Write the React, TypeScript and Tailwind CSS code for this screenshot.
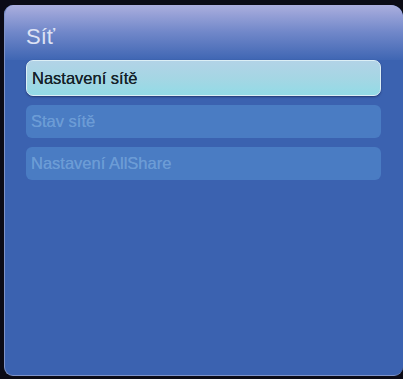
export default function App() {
  const items = ['Stav sítě', 'Nastavení AllShare']
  return (
    <div className="w-[403px] h-[379px] bg-[#0b0b16] pt-[5px] pl-[4px] pb-[3px] flex" style={{ fontFamily: '"Liberation Sans", Arial, sans-serif' }}>
      <div className="flex-1 rounded-[9px] rounded-tr-[12px] bg-[#3b62b0] border-l border-b border-[#7f93c8] overflow-hidden flex flex-col">
        <div className="h-[55px] bg-gradient-to-b from-[#abaede] via-[#7087c9] to-[#3f66b3] px-[21px] pt-[21px]">
          <div className="text-[22px] leading-none text-[#dde2f4]">Síť</div>
        </div>
        <div className="flex flex-col gap-[9px] pl-[21px] pr-[22px]">
          <div className="h-[36px] rounded-[7px] border border-[#dceff6] bg-gradient-to-b from-[#b2d3e7] via-[#a5d6e4] to-[#92dbe6] shadow-[0_1px_2px_rgba(0,0,30,0.4)] flex items-center pl-[5px] text-[16.5px] text-[#15222a] [text-shadow:0_0_0.4px_#15222a]">
            Nastavení sítě
          </div>
          {items.map(t => (
            <div key={t} className="h-[33px] rounded-[6px] bg-[#4a7cc3] flex items-center pl-[5px] text-[16.5px] text-[#6c9cd6] [text-shadow:0_0_0.4px_#6c9cd6]">
              {t}
            </div>
          ))}
        </div>
      </div>
    </div>
  )
}
